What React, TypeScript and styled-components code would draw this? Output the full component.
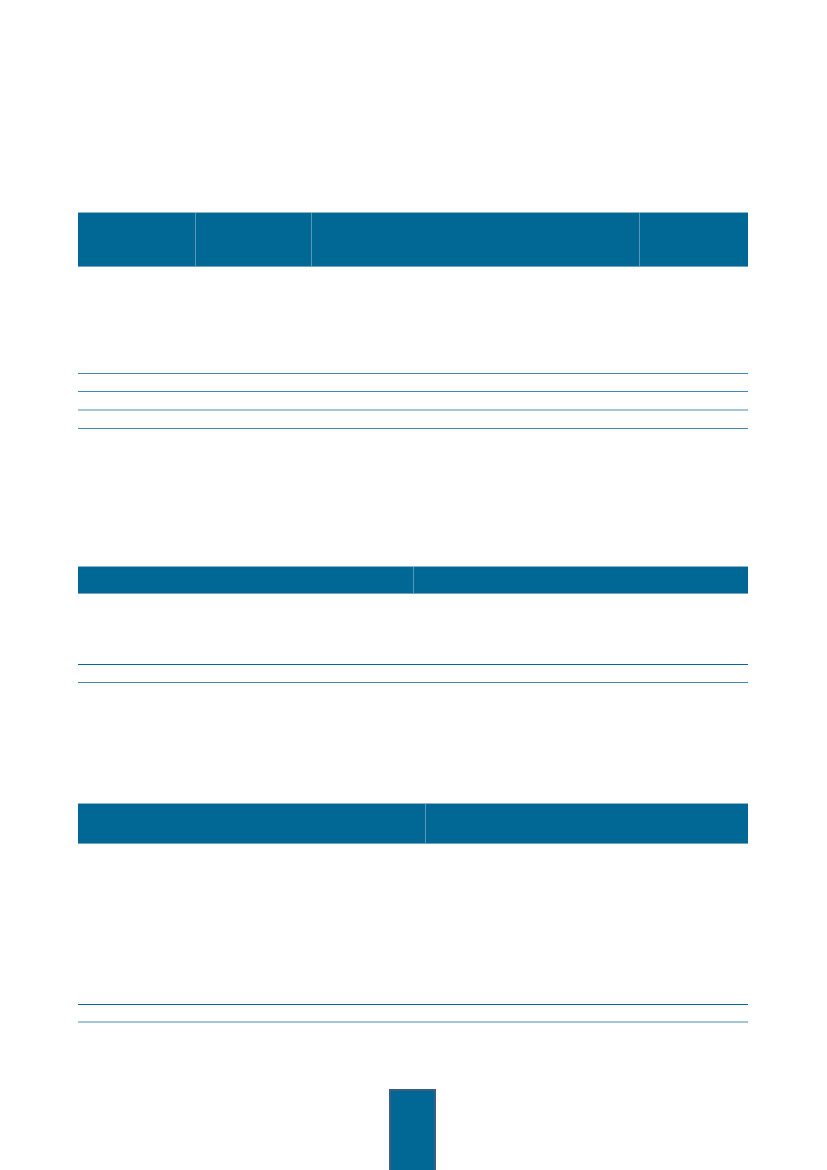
import { createGlobalStyle, styled } from 'styled-components';

type Line = 'mid' | 'light' | 'dark';

const lineColors: Record<Line, string> = {
    mid: '#4189b8',
    light: '#a5c6d8',
    dark: '#02679b',
};

const GlobalStyle = createGlobalStyle`
    html, body {
        margin: 0;
        padding: 0;
        background: #ffffff;
        font-family: "Liberation Sans", Arial, sans-serif;
    }
`;

export default function App() {
    return (
        <>
            <GlobalStyle />
            <Page>
                <DataTable
                    cols={[117, 116, 102, 226, 109]}
                    dividers={[1, 2, 4]}
                    headerHeight={55}
                    rows={[
                        { height: 107, line: 'mid' },
                        { height: 18, line: 'mid' },
                        { height: 19, line: 'light', thick: true },
                        { height: 18, line: 'mid' },
                    ]}
                />
                <DataTable
                    gap={137}
                    cols={[162, 173, 167, 168]}
                    dividers={[2]}
                    headerHeight={28}
                    rows={[
                        { height: 71, line: 'dark' },
                        { height: 18, line: 'mid' },
                    ]}
                />
                <DataTable
                    gap={120}
                    cols={[182, 165, 162, 161]}
                    dividers={[2]}
                    headerHeight={41}
                    rows={[
                        { height: 161, line: 'dark' },
                        { height: 18, line: 'light', thick: true },
                    ]}
                />
                <Footer>
                    <PageTab />
                </Footer>
            </Page>
        </>
    );
}

type Row = { height: number; line: Line; thick?: boolean };

function DataTable({
    cols,
    dividers,
    headerHeight,
    rows,
    gap = 0,
}: {
    cols: number[];
    dividers: number[];
    headerHeight: number;
    rows: Row[];
    gap?: number;
}) {
    const template = cols.map((c) => `${c}px`).join(' ');
    return (
        <TableBox $gap={gap}>
            <HeaderRow $template={template} $height={headerHeight}>
                {cols.map((_, i) => (
                    <HeaderCell key={i} $divider={dividers.includes(i)} />
                ))}
            </HeaderRow>
            {rows.map((r, i) => (
                <BodyRow key={i} $template={template} $height={r.height} $line={r.line} $thick={!!r.thick}>
                    {cols.map((_, j) => (
                        <BodyCell key={j} />
                    ))}
                </BodyRow>
            ))}
        </TableBox>
    );
}

const Page = styled.div`
    width: 827px;
    height: 1170px;
    box-sizing: border-box;
    padding: 212px 0 0 78px;
    overflow: hidden;
    display: flex;
    flex-direction: column;
`;

const TableBox = styled.div<{ $gap: number }>`
    width: 670px;
    flex: none;
    margin-top: ${(p) => p.$gap}px;
    display: flex;
    flex-direction: column;
`;

const HeaderRow = styled.div<{ $template: string; $height: number }>`
    display: grid;
    grid-template-columns: ${(p) => p.$template};
    height: ${(p) => p.$height}px;
    box-sizing: border-box;
    background: #016795;
    border-top: 1px solid #8fb5cc;
    border-bottom: 1px solid #6fa1c0;
`;

const HeaderCell = styled.div<{ $divider: boolean }>`
    border-left: ${(p) => (p.$divider ? '1px solid #5a95ba' : 'none')};
`;

const BodyRow = styled.div<{ $template: string; $height: number; $line: Line; $thick: boolean }>`
    display: grid;
    grid-template-columns: ${(p) => p.$template};
    height: ${(p) => p.$height}px;
    box-sizing: border-box;
    border-bottom-style: solid;
    border-bottom-width: ${(p) => (p.$thick ? 2 : 1)}px;
    border-bottom-color: ${(p) => lineColors[p.$line]};
`;

const BodyCell = styled.div``;

const Footer = styled.div`
    margin-top: 66px;
    width: 670px;
    display: flex;
    justify-content: center;
    align-items: stretch;
    flex: 1;
`;

const PageTab = styled.div`
    flex: 0 0 47px;
    margin-left: -1px;
    box-sizing: border-box;
    border: 2px solid #3b5d88;
    border-bottom: none;
    background: #016795;
`;
